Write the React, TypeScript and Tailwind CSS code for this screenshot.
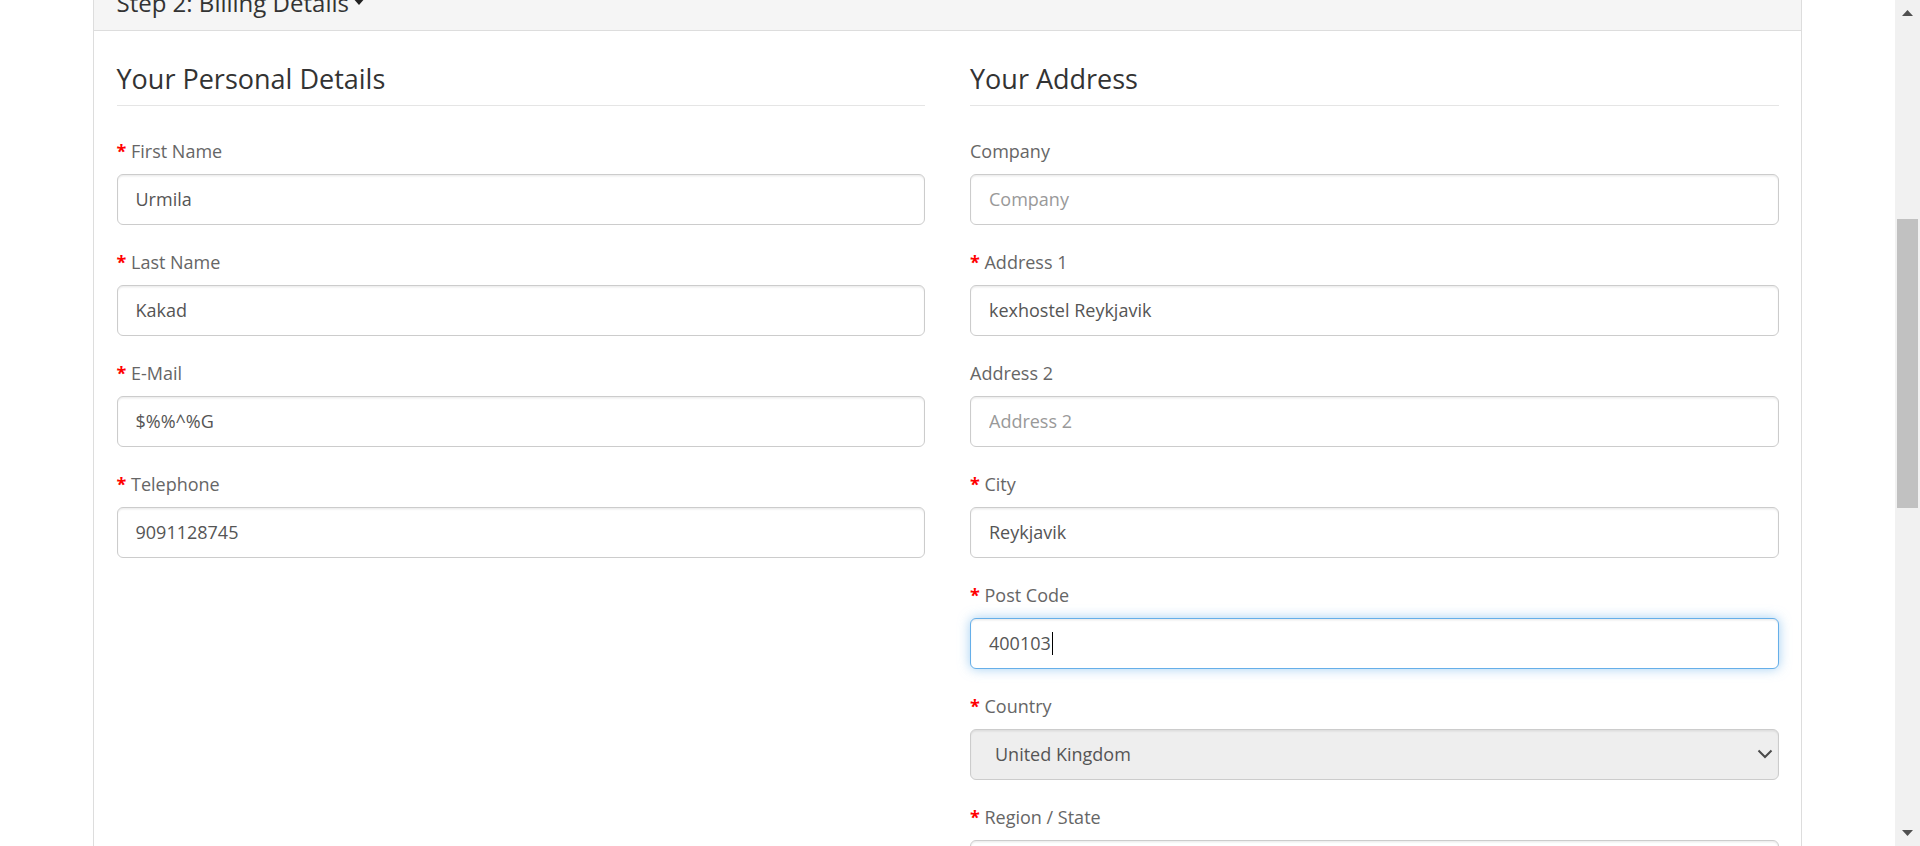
import React from "react";

type Field = {
  label: string;
  required?: boolean;
  value?: string;
  placeholder?: string;
  kind?: "input" | "focused" | "select";
};

const left: Field[] = [
  { label: "First Name", required: true, value: "Urmila" },
  { label: "Last Name", required: true, value: "Kakad" },
  { label: "E-Mail", required: true, value: "$%%^%G" },
  { label: "Telephone", required: true, value: "9091128745" },
];

const right: Field[] = [
  { label: "Company", placeholder: "Company" },
  { label: "Address 1", required: true, value: "kexhostel Reykjavik" },
  { label: "Address 2", placeholder: "Address 2" },
  { label: "City", required: true, value: "Reykjavik" },
  { label: "Post Code", required: true, value: "400103", kind: "focused" },
  { label: "Country", required: true, value: "United Kingdom", kind: "select" },
  { label: "Region / State", required: true, value: "", kind: "input" },
];

function Group({ f }: { f: Field }) {
  return (
    <div className="mb-[24px]">
      <div className="mb-[10px] text-[18px] leading-[26px] text-[#666]">
        {f.required && <span className="font-bold text-[#ff0000]">* </span>}
        {f.label}
      </div>
      {f.kind === "focused" ? (
        <div className="flex h-[51px] items-center rounded-[6px] border-[1.5px] border-[#66afe9] bg-white px-[18px] text-[18px] text-[#555] shadow-[inset_0_1.5px_1.5px_rgba(0,0,0,0.075),0_0_12px_rgba(102,175,233,0.6)]">
          <span>{f.value}</span>
          <span className="ml-[1px] h-[23px] w-[1px] bg-black" />
        </div>
      ) : f.kind === "select" ? (
        <div className="flex h-[51px] items-center justify-between rounded-[6px] border-[1.5px] border-[#ccc] bg-[#eeeeee] pl-[24px] pr-[5px] text-[18px] text-[#555] shadow-[inset_0_1.5px_1.5px_rgba(0,0,0,0.075)]">
          <span>{f.value}</span>
          <svg width="16" height="10" viewBox="0 0 16 10">
            <path d="M1.5 1.5 L8 8 L14.5 1.5" fill="none" stroke="#4a4a4a" strokeWidth="2" />
          </svg>
        </div>
      ) : (
        <input
          readOnly
          value={f.value ?? ""}
          placeholder={f.placeholder}
          className="block h-[51px] w-full rounded-[6px] border-[1.5px] border-[#ccc] bg-white px-[18px] text-[18px] text-[#555] shadow-[inset_0_1.5px_1.5px_rgba(0,0,0,0.075)] outline-none placeholder:text-[#999]"
        />
      )}
    </div>
  );
}

function Column({ title, fields }: { title: string; fields: Field[] }) {
  return (
    <div>
      <div className="mb-[32px] border-b border-[#e5e5e5] pb-[7px] text-[27px] leading-[38px] text-[#333]">
        {title}
      </div>
      {fields.map((f) => (
        <Group key={f.label} f={f} />
      ))}
    </div>
  );
}

export default function App() {
  return (
    <div className="flex h-[846px] w-[1920px] overflow-hidden bg-white font-['Open_Sans',sans-serif]">
      <div className="flex-1 overflow-hidden">
        <div className="mx-[93px] -mt-[26px] border border-[#ddd]">
          <div className="h-[56px] border-b border-[#ddd] bg-[#f5f5f5] px-[22.5px] pt-[15px]">
            <span className="text-[24px] leading-[26px] text-[#333]">
              Step 2: Billing Details
              <svg
                width="14"
                height="9"
                viewBox="0 0 14 9"
                className="ml-[3px] inline-block align-[6px]"
              >
                <path d="M0 0 L14 0 L7 8 Z" fill="#222" />
              </svg>
            </span>
          </div>
          <div className="grid grid-cols-2 gap-x-[45px] px-[22.5px] pt-[28.5px]">
            <Column title="Your Personal Details" fields={left} />
            <Column title="Your Address" fields={right} />
          </div>
        </div>
      </div>
      <div className="flex w-[25px] flex-col items-center bg-[#f1f1f1]">
        <svg width="11" height="6" viewBox="0 0 11 6" className="mt-[10px]">
          <path d="M5.5 0 L11 6 L0 6 Z" fill="#505050" />
        </svg>
        <div className="mt-[203px] h-[289px] w-[21px] bg-[#c1c1c1]" />
        <div className="flex-1" />
        <svg width="11" height="6" viewBox="0 0 11 6" className="mb-[10px]">
          <path d="M0 0 L11 0 L5.5 6 Z" fill="#505050" />
        </svg>
      </div>
    </div>
  );
}
